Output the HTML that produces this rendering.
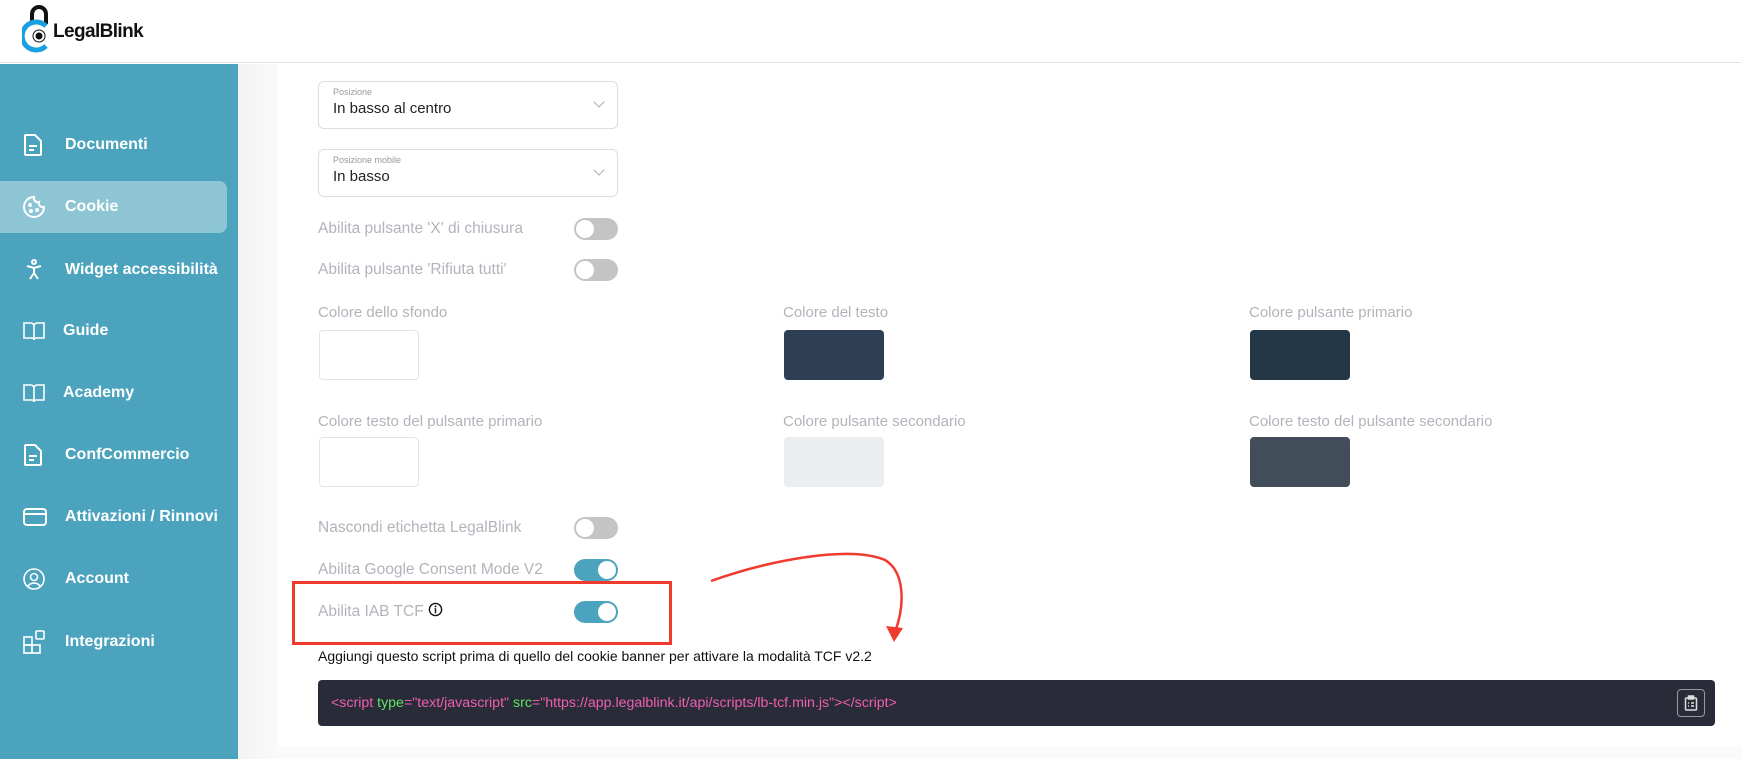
<!DOCTYPE html>
<html><head><meta charset="utf-8"><style>
*{box-sizing:border-box;margin:0;padding:0}
body{width:1741px;height:759px;overflow:hidden;background:#fff;font-family:"Liberation Sans",sans-serif;position:relative}
.hdr{position:absolute;left:0;top:0;width:1741px;height:63px;border-bottom:1px solid #e4e4e4;background:#fff}
.side{position:absolute;left:0;top:64px;width:238px;height:695px;background:#4ba3bd}
.band{position:absolute;left:238px;top:64px;width:40px;height:695px;background:linear-gradient(90deg,#f3f3f3,#fafafa)}
.item{position:absolute;left:0;width:227px;height:52px;color:#fff;font-weight:bold;font-size:16px}
.item span{position:absolute;left:65px;top:17px}
.item svg{position:absolute;left:22px;top:14px}
.act{background:#8ec5d5;border-radius:0 8px 8px 0}
.sel{position:absolute;left:318px;width:300px;height:48px;border:1px solid #dcdce2;border-radius:6px}
.sel small{position:absolute;left:14px;top:5px;font-size:9px;color:#999}
.sel b{position:absolute;left:14px;top:18px;font-size:15px;font-weight:normal;color:#222}
.sel i{position:absolute;right:14px;top:16px;width:8px;height:8px;border-right:1px solid #aaa;border-bottom:1px solid #aaa;transform:rotate(45deg)}
.lbl{position:absolute;left:318px;font-size:15.5px;color:#b3b3bb}
.tg{position:absolute;left:574px;width:44px;height:22px;border-radius:11px;background:#c4c4c4}
.tg::after{content:"";position:absolute;left:2px;top:2px;width:18px;height:18px;border-radius:50%;background:#fff}
.tg.on{background:#4ba3bd}.tg.on::after{left:24px}
.cl{position:absolute;font-size:15px;color:#b3b3bb}
.sw{position:absolute;width:100px;height:50px;border:1px solid #e4e4e8;border-radius:4px}
</style></head><body>
<div class="hdr">
<svg style="position:absolute;left:22px;top:4px" width="32" height="50" viewBox="0 0 32 50">
<path d="M10 20 V10 a7 7 0 0 1 14 0 V20" fill="none" stroke="#111" stroke-width="4"/>
<path d="M24 22 A14 14 0 1 0 24 42" fill="none" stroke="#1aa0e0" stroke-width="5"/>
<circle cx="17" cy="32" r="6" fill="#fff" stroke="#111" stroke-width="1"/><circle cx="17" cy="32" r="3.5" fill="#111"/>
</svg>
<div style="position:absolute;left:53px;top:21px;font-size:19px;font-weight:bold;color:#111;letter-spacing:-0.6px">LegalBlink</div>
</div>
<div class="side">
<div class="item" style="top:55px"><svg width="22" height="24" viewBox="0 0 22 24" fill="none" stroke="#fff" stroke-width="2"><path d="M4 2h9l6 6v13a1 1 0 0 1-1 1H4a1 1 0 0 1-1-1V3a1 1 0 0 1 1-1z"/><path d="M7 13h8M7 17h5"/></svg><span>Documenti</span></div>
<div class="item act" style="top:117px"><svg width="24" height="24" viewBox="0 0 24 24" fill="none" stroke="#fff" stroke-width="2"><path d="M12 2a10 10 0 1 0 10 10 4 4 0 0 1-5-5 4 4 0 0 1-5-5z"/><circle cx="8" cy="10" r="1"/><circle cx="9" cy="16" r="1"/><circle cx="15" cy="15" r="1"/></svg><span>Cookie</span></div>
<div class="item" style="top:180px"><svg width="24" height="24" viewBox="0 0 24 24" fill="none" stroke="#fff" stroke-width="2"><circle cx="12" cy="4" r="2"/><path d="M5 8l7 2 7-2M12 10v5l-4 6M12 15l4 6"/></svg><span>Widget accessibilità</span></div>
<div class="item" style="top:241px"><svg width="24" height="24" viewBox="0 0 24 24" fill="none" stroke="#fff" stroke-width="1.6"><path d="M2 4h7a3 3 0 0 1 3 3v14a2 2 0 0 0-2-2H2zM22 4h-7a3 3 0 0 0-3 3v14a2 2 0 0 1 2-2h8z"/></svg><span style="left:63px">Guide</span></div>
<div class="item" style="top:303px"><svg width="24" height="24" viewBox="0 0 24 24" fill="none" stroke="#fff" stroke-width="1.6"><path d="M2 4h7a3 3 0 0 1 3 3v14a2 2 0 0 0-2-2H2zM22 4h-7a3 3 0 0 0-3 3v14a2 2 0 0 1 2-2h8z"/></svg><span style="left:63px">Academy</span></div>
<div class="item" style="top:365px"><svg width="22" height="24" viewBox="0 0 22 24" fill="none" stroke="#fff" stroke-width="2"><path d="M4 2h9l6 6v13a1 1 0 0 1-1 1H4a1 1 0 0 1-1-1V3a1 1 0 0 1 1-1z"/><path d="M7 13h8M7 17h5"/></svg><span>ConfCommercio</span></div>
<div class="item" style="top:427px"><svg width="26" height="24" viewBox="0 0 26 24" fill="none" stroke="#fff" stroke-width="2"><rect x="2" y="4" width="22" height="16" rx="3"/><path d="M2 9h22"/></svg><span>Attivazioni / Rinnovi</span></div>
<div class="item" style="top:489px"><svg width="24" height="24" viewBox="0 0 24 24" fill="none" stroke="#fff" stroke-width="1.6"><circle cx="12" cy="12" r="10"/><circle cx="12" cy="10" r="3.5"/><path d="M6 19a7 6 0 0 1 12 0"/></svg><span>Account</span></div>
<div class="item" style="top:552px"><svg width="28" height="26" viewBox="0 0 28 26" fill="none" stroke="#fff" stroke-width="1.6"><rect x="2" y="7" width="8" height="8"/><rect x="2" y="15" width="8" height="8"/><rect x="10" y="15" width="8" height="8"/><rect x="14" y="1" width="8" height="8" rx="1"/></svg><span>Integrazioni</span></div>
</div>
<div class="band"></div>
<div style="position:absolute;left:278px;top:746px;width:1463px;height:13px;background:#fafafa"></div>

<div class="sel" style="top:81px"><small>Posizione</small><b>In basso al centro</b><i></i></div>
<div class="sel" style="top:149px"><small>Posizione mobile</small><b>In basso</b><i></i></div>

<div class="lbl" style="top:220px">Abilita pulsante 'X' di chiusura</div><div class="tg" style="top:218px"></div>
<div class="lbl" style="top:261px">Abilita pulsante 'Rifiuta tutti'</div><div class="tg" style="top:259px"></div>

<div class="cl" style="left:318px;top:304px">Colore dello sfondo</div>
<div class="cl" style="left:783px;top:304px">Colore del testo</div>
<div class="cl" style="left:1249px;top:304px">Colore pulsante primario</div>
<div class="sw" style="left:319px;top:330px;background:#fff"></div>
<div class="sw" style="left:784px;top:330px;background:#2e3f55;border-color:#2e3f55"></div>
<div class="sw" style="left:1250px;top:330px;background:#243747;border-color:#243747"></div>
<div class="cl" style="left:318px;top:413px">Colore testo del pulsante primario</div>
<div class="cl" style="left:783px;top:413px">Colore pulsante secondario</div>
<div class="cl" style="left:1249px;top:413px">Colore testo del pulsante secondario</div>
<div class="sw" style="left:319px;top:437px;background:#fff"></div>
<div class="sw" style="left:784px;top:437px;background:#eaeef1;border-color:#eaeef1"></div>
<div class="sw" style="left:1250px;top:437px;background:#414e59;border-color:#414e59"></div>

<div class="lbl" style="top:519px">Nascondi etichetta LegalBlink</div><div class="tg" style="top:517px"></div>
<div class="lbl" style="top:561px">Abilita Google Consent Mode V2</div><div class="tg on" style="top:559px"></div>
<div class="lbl" style="top:602px">Abilita IAB TCF <svg width="15" height="15" viewBox="0 0 16 16" style="vertical-align:-1px"><circle cx="8" cy="8" r="6.5" fill="none" stroke="#111" stroke-width="1.5"/><path d="M8 7v5M7 7h1" stroke="#111" stroke-width="1.5"/><circle cx="8" cy="4.6" r="1" fill="#111"/></svg></div><div class="tg on" style="top:601px"></div>
<div style="position:absolute;left:292px;top:581px;width:380px;height:64px;border:3px solid #f03a2e"></div>
<svg style="position:absolute;left:700px;top:550px" width="220" height="100" viewBox="0 0 220 100"><path d="M11 31 C70 10 150 -5 185 10 C205 22 205 55 195 82" fill="none" stroke="#f03a2e" stroke-width="2.5"/><path d="M186 76 L194 92 L203 78 Z" fill="#f03a2e"/></svg>
<div style="position:absolute;left:318px;top:648px;font-size:14px;color:#111">Aggiungi questo script prima di quello del cookie banner per attivare la modalità TCF v2.2</div>
<div style="position:absolute;left:318px;top:680px;width:1397px;height:46px;background:#292c38;border-radius:4px">
<div style="position:absolute;left:13px;top:15px;font-size:14.2px;color:#ee5fae;white-space:nowrap">&lt;script <span style="color:#5fe35f">type</span>="text/javascript" <span style="color:#5fe35f">src</span>="https://app.legalblink.it/api/scripts/lb-tcf.min.js"&gt;&lt;/script&gt;</div>
<div style="position:absolute;left:1359px;top:9px;width:28px;height:28px;border:1.5px solid #999;border-radius:4px"><svg style="position:absolute;left:6px;top:5px" width="14" height="16" viewBox="0 0 14 16" fill="none" stroke="#ddd" stroke-width="1.5"><rect x="1.5" y="3" width="11" height="12" rx="1"/><rect x="4.5" y="1" width="5" height="3" fill="#ddd"/><path d="M4 8h1M7 8h3M4 11h1M7 11h3"/></svg></div>
</div>
</body></html>
